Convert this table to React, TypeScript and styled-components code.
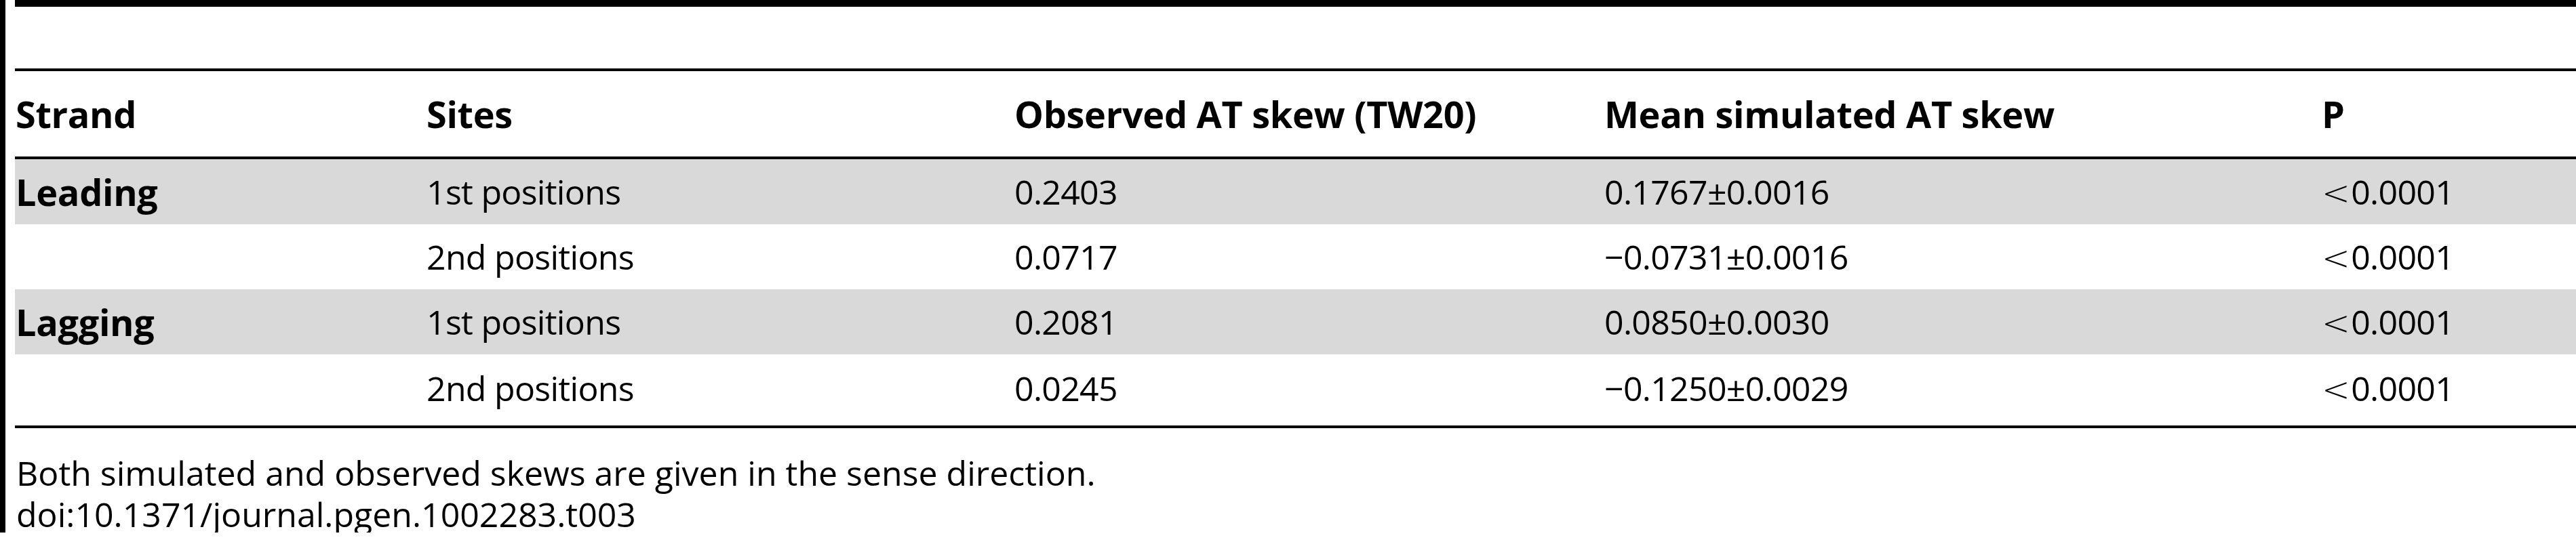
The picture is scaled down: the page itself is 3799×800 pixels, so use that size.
import React from 'react';
import styled, { createGlobalStyle } from 'styled-components';

const GlobalStyle = createGlobalStyle`
  html, body {
    margin: 0;
    padding: 0;
    background: #ffffff;
  }
  body {
    font-family: 'Open Sans', 'Noto Sans', 'Liberation Sans', sans-serif;
    color: #000000;
  }
`;

type Row = {
  strand?: string;
  site: string;
  observed: string;
  mean: string;
  p: string;
  shaded?: boolean;
  last?: boolean;
};

const rows: Row[] = [
  { strand: 'Leading', site: '1st positions', observed: '0.2403', mean: '0.1767\u00b10.0016', p: '0.0001', shaded: true },
  { site: '2nd positions', observed: '0.0717', mean: '\u22120.0731\u00b10.0016', p: '0.0001' },
  { strand: 'Lagging', site: '1st positions', observed: '0.2081', mean: '0.0850\u00b10.0030', p: '0.0001', shaded: true },
  { site: '2nd positions', observed: '0.0245', mean: '\u22120.1250\u00b10.0029', p: '0.0001', last: true },
];

const App = () => {
  return (
    <>
      <GlobalStyle />
      <Frame>
        <Sheet>
          <TopRule />
          <CaptionSpace />
          <Table>
            <HeaderRow>
              <HeadCell>Strand</HeadCell>
              <HeadCell>Sites</HeadCell>
              <HeadCell>Observed AT skew (TW20)</HeadCell>
              <HeadCell>Mean simulated AT skew</HeadCell>
              <HeadCell>P</HeadCell>
            </HeaderRow>
            {rows.map((r, i) => (
              <BodyRow key={i} $shaded={r.shaded} $last={r.last}>
                <StrandCell>{r.strand}</StrandCell>
                <Cell>{r.site}</Cell>
                <Cell>{r.observed}</Cell>
                <Cell>{r.mean}</Cell>
                <Cell>
                  <LessThan>&lt;</LessThan>
                  {r.p}
                </Cell>
              </BodyRow>
            ))}
          </Table>
          <Footer>
            <FootLine>Both simulated and observed skews are given in the sense direction.</FootLine>
            <FootLine>doi:10.1371/journal.pgen.1002283.t003</FootLine>
          </Footer>
        </Sheet>
      </Frame>
    </>
  );
};

export default App;

const Frame = styled.div`
  display: flex;
  align-items: flex-start;
  width: 3799px;
  height: 786px;
  border-left: 8px solid #000;
  box-sizing: border-box;
`;

const Sheet = styled.div`
  flex: 1;
  margin-left: 14px;
`;

const TopRule = styled.div`
  height: 10px;
  background: #000;
`;

const CaptionSpace = styled.div`
  height: 91px;
`;

const Table = styled.div`
  border-top: 4px solid #000;
  border-bottom: 4px solid #000;
`;

const columns = '606px 867px 870px 1058px 1fr';

const HeaderRow = styled.div`
  display: grid;
  grid-template-columns: ${columns};
  align-items: center;
  height: 126px;
  border-bottom: 4px solid #000;
  padding-left: 1px;
`;

const HeadCell = styled.div`
  font-size: 54px;
  font-weight: 700;
  letter-spacing: -0.3px;
  white-space: nowrap;
`;

const BodyRow = styled.div<{ $shaded?: boolean; $last?: boolean }>`
  display: grid;
  grid-template-columns: ${columns};
  align-items: center;
  height: ${(p) => (p.$last ? '105px' : '96px')};
  padding-bottom: ${(p) => (p.$last ? '6px' : '0')};
  box-sizing: border-box;
  background: ${(p) => (p.$shaded ? '#d9d9d9' : 'transparent')};
  padding-left: 1px;
`;

const Cell = styled.div`
  font-size: 50px;
  font-weight: 400;
  letter-spacing: -0.7px;
  white-space: nowrap;
`;

const StrandCell = styled(Cell)`
  font-size: 54px;
  font-weight: 700;
  letter-spacing: -0.3px;
`;

const LessThan = styled.span`
  font-family: 'DejaVu Sans', sans-serif;
  font-weight: 200;
  margin-right: 2px;
`;

const Footer = styled.div`
  padding-top: 36px;
  padding-left: 2px;
`;

const FootLine = styled.div`
  font-size: 50px;
  line-height: 61px;
  white-space: nowrap;
`;
